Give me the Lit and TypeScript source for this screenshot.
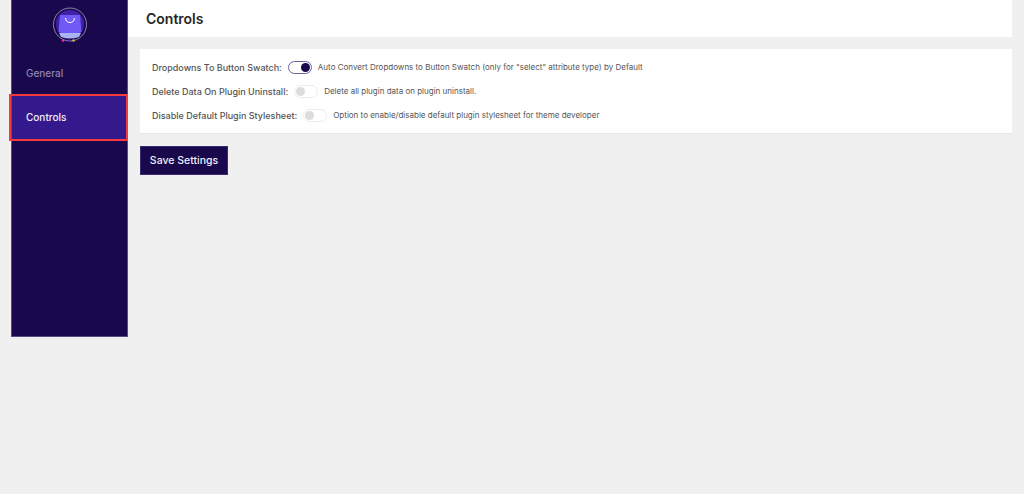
import { LitElement, html, css } from "lit";
import { customElement } from "lit/decorators.js";

const rows = [
  { label: "Dropdowns To Button Swatch:", on: true, text: 'Auto Convert Dropdowns to Button Swatch (only for "select" attribute type) by Default' },
  { label: "Delete Data On Plugin Uninstall:", on: false, text: "Delete all plugin data on plugin uninstall." },
  { label: "Disable Default Plugin Stylesheet:", on: false, text: "Option to enable/disable default plugin stylesheet for theme developer" },
];

@customElement("app-root")
export class AppRoot extends LitElement {
  static styles = css`
    :host {
      display: block;
      height: 494px;
      background: #f0f0f0;
      font-family: Inter, "Liberation Sans", sans-serif;
      color: #444;
      overflow: hidden;
    }
    .page { display: flex; padding: 0 12px 0 11px; align-items: flex-start; }
    .sidebar {
      box-sizing: border-box;
      width: 117px;
      height: 337px;
      flex: none;
      background: #19084c;
      border: solid #5a4c8a;
      border-width: 0 1px 1px 1px;
      display: flex;
      flex-direction: column;
      align-items: stretch;
    }
    .logo { display: flex; justify-content: center; padding-top: 7px; height: 37px; margin-bottom: 7px; }
    .item {
      height: 44px;
      display: flex;
      align-items: center;
      padding-left: 14px;
      font-size: 10px;
      font-weight: 500;
      color: #8f86b3;
      position: relative;
    }
    .item.active { background: #33198c; color: #f1eff8; }
    .item.active::after {
      content: "";
      position: absolute;
      left: -3px;
      right: -1px;
      top: -1px;
      bottom: -2px;
      border: 2px solid #f43a3f;
      box-sizing: border-box;
      pointer-events: none;
    }
    .main { flex: 1; min-width: 0; }
    .header {
      height: 37px;
      background: #fff;
      display: flex;
      align-items: center;
      padding-left: 18px;
      font-size: 14px;
      font-weight: 600;
      color: #262626;
    }
    .content { padding: 12px 0 0 12px; }
    .card {
      box-sizing: border-box;
      height: 85px;
      background: #fff;
      border-bottom: 1px solid #e8e8e8;
      padding: 6px 12px;
      display: flex;
      flex-direction: column;
      justify-content: space-around;
    }
    .row { display: flex; align-items: center; height: 24px; }
    .label { font-size: 9px; font-weight: 500; color: #555; margin-right: 6px; white-space: nowrap; }
    .desc { font-size: 8px; color: #555; margin-left: 6px; white-space: nowrap; }
    .toggle {
      box-sizing: border-box;
      width: 24px;
      height: 13px;
      border-radius: 7px;
      background: #fff;
      border: 1px solid #ececec;
      display: flex;
      align-items: center;
      padding: 0 1px;
      flex: none;
    }
    .toggle .knob { width: 9px; height: 9px; border-radius: 50%; background: #dcdcdc; }
    .toggle.on { border-color: #6c5f9e; justify-content: flex-end; }
    .toggle.on .knob { background: #19084c; }
    .save {
      margin-top: 12px;
      box-sizing: border-box;
      width: 88px;
      height: 29px;
      background: #19084c;
      color: #f1eff8;
      border: 1px solid #3b2c74;
      font: 500 10.5px Inter, "Liberation Sans", sans-serif;
      padding: 0;
      display: block;
    }
  `;

  private logo() {
    return html`<svg width="36" height="36" viewBox="0 0 36 36">
      <circle cx="18" cy="17.5" r="16.5" fill="#19084c" stroke="#8e84b8" stroke-width="1"></circle>
      <circle cx="18" cy="17" r="14" fill="#3f22a8"></circle>
      <path d="M8 8 H28 L29.5 25 Q18 31 6.5 25 Z" fill="#6f5af5"></path>
      <path d="M7 26 H29 L27 30 Q18 33 9 30 Z" fill="#a9b2f2"></path>
      <path d="M13.5 11 Q14 15.5 18 15.5 Q22 15.5 22.5 11" fill="none" stroke="#fff" stroke-width="1"></path>
      <circle cx="11" cy="33.5" r="1.2" fill="#ec3a8e"></circle>
      <circle cx="17" cy="33.5" r="1.2" fill="#4a2bd0"></circle>
      <circle cx="21.5" cy="33.5" r="1.2" fill="#f5b21a"></circle>
    </svg>`;
  }

  render() {
    return html`<div class="page">
      <nav class="sidebar">
        <div class="logo">${this.logo()}</div>
        <div class="item">General</div>
        <div class="item active">Controls</div>
      </nav>
      <div class="main">
        <div class="header">Controls</div>
        <div class="content">
          <div class="card">
            ${rows.map(
              (r) => html`<div class="row">
                <span class="label">${r.label}</span>
                <span class="toggle ${r.on ? "on" : ""}"><span class="knob"></span></span>
                <span class="desc">${r.text}</span>
              </div>`
            )}
          </div>
          <button class="save">Save Settings</button>
        </div>
      </div>
    </div>`;
  }
}
